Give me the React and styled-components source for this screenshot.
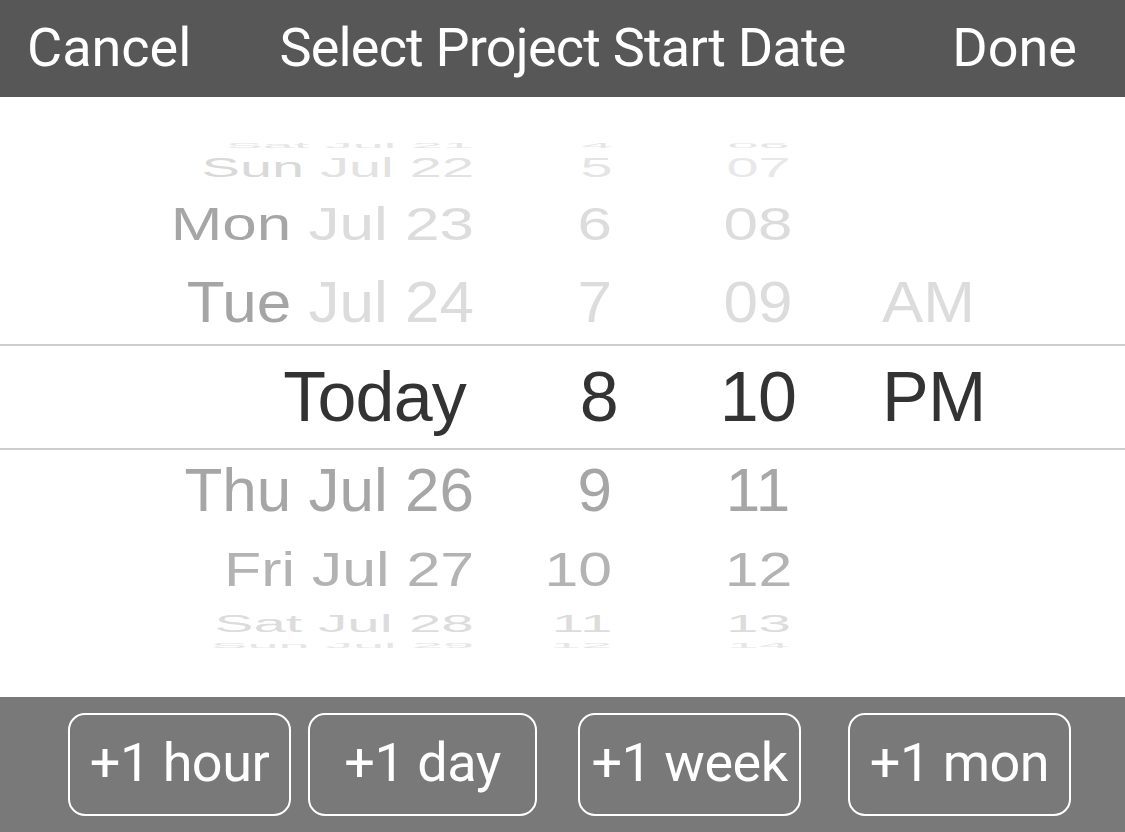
import React from "react";
import styled, { createGlobalStyle } from "styled-components";

const GlobalStyle = createGlobalStyle`
  html, body {
    margin: 0;
    padding: 0;
    background: #ffffff;
    overflow: hidden;
  }
  * { box-sizing: border-box; }
`;

const Screen = styled.div`
  width: 1125px;
  height: 832px;
  display: flex;
  flex-direction: column;
  font-family: "Liberation Sans", Arial, sans-serif;
`;

const TopBar = styled.header`
  height: 97px;
  flex: none;
  background: #575757;
  display: grid;
  grid-template-columns: 1fr auto 1fr;
  align-items: center;
  padding: 0 0 3px;
  font-family: Roboto, "Liberation Sans", sans-serif;
  font-size: 54px;
  color: #ffffff;
`;

const BarButton = styled.span`
  justify-self: ${(p) => (p.$end ? "end" : "start")};
  margin: ${(p) => (p.$end ? "0 48px 0 0" : "0 0 0 27px")};
  cursor: pointer;
`;

const Title = styled.span`
  justify-self: center;
  letter-spacing: -0.8px;
`;

const Picker = styled.div`
  height: 600px;
  flex: none;
  background: #ffffff;
  padding-top: 43px;
  display: flex;
  flex-direction: column;
  overflow: hidden;
`;

const Row = styled.div`
  height: ${(p) => p.$h}px;
  flex: none;
  display: grid;
  grid-template-columns: 474px 138px 270px 1fr;
  grid-template-rows: minmax(0, 1fr);
  overflow: hidden;
  border-top: ${(p) => (p.$selected ? "2px solid #cdcdcd" : "none")};
  border-bottom: ${(p) => (p.$selected ? "2px solid #cdcdcd" : "none")};
  font-size: ${(p) => (p.$selected ? 70 : 62)}px;
  letter-spacing: ${(p) => (p.$selected ? "-0.8px" : "0")};
  line-height: 1;
`;

const Cell = styled.div`
  min-height: 0;
  display: flex;
  align-items: center;
  justify-content: ${(p) => p.$justify};
  padding-left: ${(p) => p.$padLeft || 0}px;
  margin-right: ${(p) => p.$shift || 0}px;
  white-space: nowrap;
`;

const Label = styled.span`
  display: block;
  flex: none;
  line-height: 1;
  transform: scale(${(p) => p.$sx}, ${(p) => p.$sy});
  transform-origin: ${(p) => p.$origin} center;
  color: ${(p) => p.$color};
`;

const Part = styled.span`
  color: ${(p) => p.$color};
`;

const BottomBar = styled.div`
  height: 135px;
  flex: none;
  background: #797979;
  display: flex;
  align-items: flex-start;
  padding: 16px 0 0 68px;
`;

const QuickButton = styled.button`
  width: ${(p) => p.$w}px;
  height: 103px;
  margin-left: ${(p) => p.$ml}px;
  border: 2px solid #ffffff;
  border-radius: 17px;
  background: transparent;
  color: #ffffff;
  font-family: Roboto, "Liberation Sans", sans-serif;
  font-size: 54px;
  letter-spacing: -0.5px;
  padding: 0 0 4px;
  display: flex;
  align-items: center;
  justify-content: center;
  cursor: pointer;
`;

const rows = [
  { h: 10, sx: 0.9, sy: 0.12, day: ["Sat", "#e6e6e6"], rest: ["Jul 21", "#e6e6e6"], hour: ["4", "#e6e6e6"], min: ["06", "#e6e6e6"] },
  { h: 36, sx: 0.93, sy: 0.45, day: ["Sun", "#d9d9d9"], rest: ["Jul 22", "#e2e2e2"], hour: ["5", "#e4e4e4"], min: ["07", "#e8e8e8"] },
  { h: 76, sx: 1, sy: 0.74, day: ["Mon", "#a6a6a6"], rest: ["Jul 23", "#dcdcdc"], hour: ["6", "#dcdcdc"], min: ["08", "#dcdcdc"] },
  { h: 82, sx: 1, sy: 0.92, day: ["Tue", "#a5a5a5"], rest: ["Jul 24", "#dcdcdc"], hour: ["7", "#dcdcdc"], min: ["09", "#dcdcdc"], period: ["AM", "#dcdcdc"] },
  { h: 106, sx: 1, sy: 1, selected: true, day: ["", "#333333"], rest: ["Today", "#333333"], hour: ["8", "#333333"], min: ["10", "#333333"], period: ["PM", "#333333"] },
  { h: 80, sx: 1, sy: 1, day: ["Thu", "#a6a6a6"], rest: ["Jul 26", "#a6a6a6"], hour: ["9", "#a6a6a6"], min: ["11", "#a6a6a6"] },
  { h: 80, sx: 0.98, sy: 0.77, day: ["Fri", "#b3b3b3"], rest: ["Jul 27", "#b3b3b3"], hour: ["10", "#b3b3b3"], min: ["12", "#b3b3b3"] },
  { h: 28, sx: 0.94, sy: 0.4, day: ["Sat", "#dcdcdc"], rest: ["Jul 28", "#dcdcdc"], hour: ["11", "#dcdcdc"], min: ["13", "#dcdcdc"] },
  { h: 14, sx: 0.9, sy: 0.12, day: ["Sun", "#e6e6e6"], rest: ["Jul 29", "#e6e6e6"], hour: ["12", "#e6e6e6"], min: ["14", "#e6e6e6"] },
];

const buttons = [
  { label: "+1 hour", w: 223, ml: 0 },
  { label: "+1 day", w: 229, ml: 17 },
  { label: "+1 week", w: 223, ml: 41 },
  { label: "+1 mon", w: 223, ml: 47 },
];

export default function App() {
  return (
    <>
      <GlobalStyle />
      <Screen>
        <TopBar>
          <BarButton>Cancel</BarButton>
          <Title>Select Project Start Date</Title>
          <BarButton $end>Done</BarButton>
        </TopBar>
        <Picker>
          {rows.map((r, i) => (
            <Row key={i} $h={r.h} $selected={r.selected}>
              <Cell $justify="flex-end" $shift={r.selected ? 8 : 0}>
                <Label $sx={r.sx} $sy={r.sy} $origin="right" $color={r.rest[1]}>
                  {r.day[0] && <Part $color={r.day[1]}>{r.day[0]} </Part>}
                  {r.rest[0]}
                </Label>
              </Cell>
              <Cell $justify="flex-end" $shift={r.selected ? -6 : 0}>
                <Label $sx={r.sx} $sy={r.sy} $origin="right" $color={r.hour[1]}>
                  {r.hour[0]}
                </Label>
              </Cell>
              <Cell $justify="center" $padLeft={22}>
                <Label $sx={r.sx} $sy={r.sy} $origin="center" $color={r.min[1]}>
                  {r.min[0]}
                </Label>
              </Cell>
              <Cell $justify="flex-start">
                {r.period && (
                  <Label $sx={r.sx} $sy={r.sy} $origin="left" $color={r.period[1]}>
                    {r.period[0]}
                  </Label>
                )}
              </Cell>
            </Row>
          ))}
        </Picker>
        <BottomBar>
          {buttons.map((b) => (
            <QuickButton key={b.label} $w={b.w} $ml={b.ml}>
              {b.label}
            </QuickButton>
          ))}
        </BottomBar>
      </Screen>
    </>
  );
}
